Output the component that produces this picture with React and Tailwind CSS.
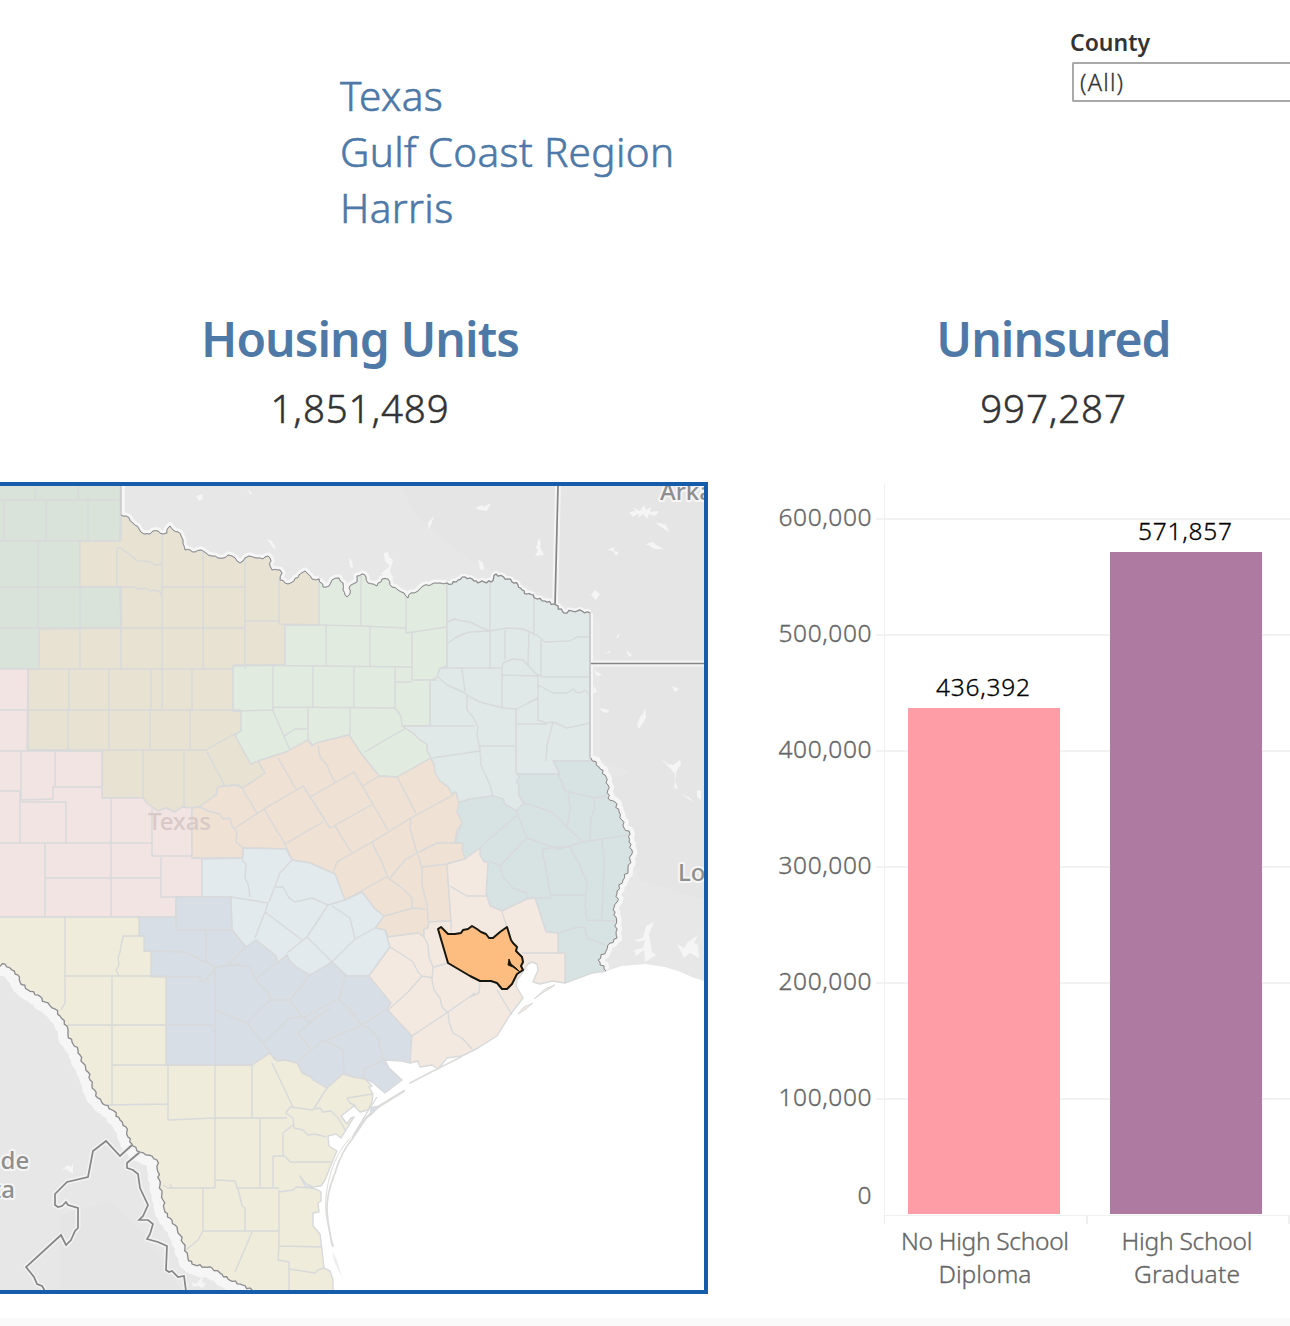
import React from "react";

const FONT = '"Noto Sans", "Open Sans", sans-serif';

/* ---------- geometry helpers ---------- */

const parse = (s) => s.trim().split(/\s+/).map((p) => p.split(",").map(Number));
const join = (pts) => pts.map((p) => p.map((n) => Math.round(n * 10) / 10).join(",")).join(" ");

// Adds small meanders between the points of a river course.
function meander(s, amp, step) {
  const pts = parse(s);
  const out = [pts[0]];
  let k = 0;
  for (let i = 1; i < pts.length; i++) {
    const [x0, y0] = pts[i - 1];
    const [x1, y1] = pts[i];
    const d = Math.hypot(x1 - x0, y1 - y0) || 1;
    const n = Math.max(1, Math.round(d / step));
    for (let j = 1; j < n; j++) {
      k++;
      const off = Math.sin(k * 2.3) * amp;
      out.push([x0 + ((x1 - x0) * j) / n - ((y1 - y0) / d) * off, y0 + ((y1 - y0) * j) / n + ((x1 - x0) / d) * off]);
    }
    out.push([x1, y1]);
  }
  return join(out);
}

/* ---------- map data ---------- */

const RED_WEST = meander(
  "121,515 126,516 133,523 139,529 144,534 150,534 153,531 158,531 163,534 167,533 168,528 170,526 173,530 178,532 181,536 183,540 185,550 190,550 195,552 201,550 206,553 212,556 218,558 224,558 228,555 232,556 237,561 240,563 245,558 249,556 256,558 263,559 265,557 268,556 270,558 271,561 270,566 272,570 280,570 282,573 280,580 288,584 294,581 299,575 305,571 308,574 312,579 319,579", 0.9, 3);
const RED_MID = meander(
  "319,579 323,587 329,586 332,580 339,578 343,583 343,590 345,595 347,597 350,594 349,588 353,584 357,582 357,576 362,574 366,577 368,583 373,584 377,586 382,579 388,579 392,587 398,590 404,593 408,598 411,593 418,591 423,586 432,584 440,583 447,583", 1, 3);
const RED_EAST = meander(
  "447,583 452,584 458,580 465,577 470,578 474,581 480,582 491,582 496,574 508,579 518,585 522,590 527,594 533,595 537,599 545,601 556,605 564,613 572,611 582,611 590,613", 1.3, 2.4);
const SABINE = meander(
  "591,758 599,767 605,775 608,785 608,798 615,802 619,812 622,820 624,828 630,834 629,842 632,850 630,860 628,870 623,880 617,891 617,902 613,910 616,917 616,932 617,938 610,943 606,951 598,960 606,971", 1.4, 2.8);
const RIO = meander(
  "252,1290 240,1284 228,1279 220,1273 212,1268 205,1267 192,1264 188,1258 185,1248 180,1235 175,1225 165,1212 163,1200 160,1185 158,1172 157,1160 152,1156 146,1155 140,1152 133,1146 128,1137 126,1127 120,1120 114,1111 105,1105 98,1098 92,1085 88,1072 83,1063 78,1050 72,1042 68,1035 67,1026 60,1016 55,1009 45,1002 38,995 28,990 20,982 18,975 12,970 5,964 -2,966", 1.2, 2.8);

const SE_WEST = "565,983 565,953 558,953 558,933 546,932 535,898 527,899 502,911 490,906 486,893 488,862 484,862 480,855 480,848 465,859";
const NE_SE = "458,803 470,799 493,796 503,799 505,804 516,811 524,803 519,796 519,785 517,783 517,780 520,777 517,774 560,774 553,761 590,761";
const CENTRAL_EAST = "431,758 434,765 435,773 440,781 448,787 452,794 456,792 457,797 459,803 457,812 462,823 457,830 455,842 463,843 462,849 465,859";
const CENTRAL_NORTH = "258,761 286,752 308,740 312,746 316,743 320,742 349,735 360,752 379,776 397,777 431,758";
const CENTRAL_SOUTH = "451,921 429,922 428,928 424,929 424,937 418,933 388,937 385,930 375,928 384,916 375,909 362,892 345,900 335,874 310,863 292,860 286,849 243,848 243,858 202,858 192,858";
const CAPITAL_SOUTH = "390,947 369,976 347,976 332,962 310,975 296,967 289,960 287,955 278,963 276,956 256,940 246,947 232,930 231,897";
const ALAMO_WEST = "252,1065 166,1065 166,977 151,977 151,951 144,951 144,936 139,936 139,917";

const REGIONS = [
  ["#d9e3d9", "-2,484 120,484 120,541 80,541 80,587 120,587 121,628 39,629 39,669 -2,669"],
  ["#e8e2d3", RED_WEST + " 319,625 285,625 285,665 233,666 233,711 241,711 241,731 235,735 243,750 251,764 258,761 265,773 243,788 235,785 218,787 216,795 199,807 192,808 182,807 175,812 166,808 158,811 152,807 147,803 143,798 102,798 102,751 28,750 28,669 39,669 39,629 121,628 120,587 80,587 80,541 120,541"],
  ["#f1e4e3", "-2,669 28,669 27,750 102,751 102,798 143,798 147,803 152,807 158,811 166,808 175,812 182,807 192,808 192,858 202,858 202,897 176,897 176,917 -2,917"],
  ["#e1ebe0", RED_MID + " 447,667 440,668 437,677 430,681 430,726 402,726 413,733 420,740 427,744 427,750 431,758 397,777 379,776 360,752 349,735 320,742 314,746 308,740 286,752 258,761 251,764 243,750 235,735 241,731 241,711 233,711 233,666 285,665 285,625 319,625"],
  ["#e0e8e8", RED_EAST + " 590,761 553,761 560,774 517,774 520,777 517,783 519,785 519,796 524,803 516,811 505,804 503,799 493,796 470,799 458,803 457,797 456,792 452,794 448,787 440,781 435,773 434,765 431,758 427,750 427,744 420,740 413,733 402,726 430,726 430,681 437,677 440,668 447,667"],
  ["#d7e3e2", NE_SE + " " + SABINE + " 592,973 " + SE_WEST + " 455,842 462,823 457,812"],
  ["#efe1d3", "192,808 199,807 216,795 218,787 235,785 243,788 265,773 " + CENTRAL_NORTH + " " + CENTRAL_EAST + " 447,864 " + CENTRAL_SOUTH],
  ["#e2eaee", "202,859 243,858 243,848 286,849 292,860 310,863 335,874 345,900 362,892 375,909 384,916 375,928 385,930 " + CAPITAL_SOUTH + " 202,897"],
  ["#d8dee5", "176,897 231,897 232,930 246,947 256,940 276,956 278,963 287,955 289,960 296,967 310,975 332,962 347,976 369,976 391,1003 387,1009 412,1036 410,1063 402,1061 385,1060 389,1068 402,1080 385,1093 372,1082 365,1079 353,1077 343,1074 327,1088 313,1080 311,1077 302,1073 297,1063 285,1060 277,1061 270,1053 " + ALAMO_WEST + " 176,917"],
  ["#efecdb", "-2,917 139,917 139,936 144,936 144,951 151,951 151,977 166,977 166,1065 252,1065 270,1053 277,1061 285,1060 297,1063 302,1073 311,1077 313,1080 327,1088 343,1074 353,1077 365,1079 372,1086 369,1087 373,1094 372,1102 368,1110 360,1112 354,1106 341,1116 347,1124 351,1118 354,1117 341,1138 336,1134 328,1136 329,1146 337,1151 331,1165 325,1180 321,1186 313,1187 306,1184 300,1176 305,1186 318,1190 321,1192 321,1201 318,1203 319,1212 313,1213 313,1226 320,1234 322,1250 324,1268 330,1271 333,1280 333,1292 252,1292 " + RIO],
  ["#f3e9e0", "465,859 480,848 480,855 484,862 488,862 486,893 490,906 502,911 527,899 535,898 546,932 558,933 558,953 565,953 565,983 552,981 540,984 533,982 538,970 537,964 532,962 528,964 523,972 517,980 516,986 523,998 510,1015 497,1036 478,1048 462,1056 447,1058 438,1069 432,1065 420,1067 418,1061 410,1063 412,1036 387,1009 391,1003 369,976 390,947 385,930 388,937 418,933 424,937 424,929 428,928 429,922 451,921 447,864"],
];

const COUNTY_LINES = `
M0 500H120M35 486V500M78 486V500M4 500V541M46 500V541M88 500V541M0 541H80M38 541V628M80 587V628M0 587H120M0 628H39
M121 515V541M117 548L121 548L138 561L143 561L150 562L155 565L162 564M117 548V587M120 587H134L138 589L145 588L150 591L155 590L160 592L162 596
M162 534V710M162 587H245M203 551V669M245 557V669M245 621H280M279 580V624L319 625M245 665H285M39 628H245M28 669H233
M121 587V669M80 628V669M69 669V710M109 669V710M151 669V710M192 669V710M0 710H241M68 710V750M109 710V750M150 710V750M190 710V750
M28 750H206L236 733M143 750V798M184 751V808M207 752L225 786L240 785
M0 751H102M21 751V800M55 751V787M102 787H53V799L21 800M0 791H20M21 802H66V843M20 791V843M0 843H152M111 798V916M152 809V856H192M161 857V897H202M45 843V916M45 878H161
M65 917V1003L61 1010M65 976H166M123 936H144M123 936L121 946L120 952L118 958L119 965L116 970L119 976M112 977V1105M68 1025H215M112 1065H252M105 1105L168 1104
M168 1065V1120L215 1118H287M215 1065V1188M163 1185L168 1188H215M170 1184L172 1188M215 1180L235 1181L237 1188H279M203 1188V1231L198 1240L186 1250M203 1231H279
M260 1118V1188M252 1065V1118M238 1188L242 1206L245 1208V1231M279 1190V1246L322 1247M273 1156V1188M273 1156L285 1156L290 1162H331M283 1133V1156M283 1133L294 1124
M293 1118L286 1113L290 1107L313 1110M272 1063L293 1107M313 1110L327 1088M315 1109L320 1108L323 1112L331 1111L338 1118L346 1131M293 1118L294 1128L303 1130L308 1135L315 1134L326 1137
M347 1098L373 1094M347 1098L350 1103L356 1106M279 1192L293 1190L296 1187L313 1188M252 1232L235 1272M279 1246L278 1260L289 1262V1290M289 1269L315 1273L318 1270L324 1268
M361 576V626M285 625L319 625L361 626L405 628M406 596V633L447 627M326 625V665M370 627V667M233 665L412 667M412 632V680H437M273 665V708M313 666V708M354 667V708M395 667V708M395 682H412
M233 711L273 710V707L395 708M273 711L290 750M308 708V740M283 737L295 729H308M350 708V735M368 750L406 728M365 752L377 745M395 708L401 716L402 726
M447 622L455 619L462 621L470 622L480 627L490 631L507 628L523 629L537 635L545 642L570 641L577 637L590 637M447 644L455 638L463 634L470 632L490 631M490 582V668M505 630V660M529 632L528 665M534 593V636M541 640V676
M440 668L502 668L503 663L513 659L523 660L536 674L543 677L590 677M502 668V707M502 675L538 676M538 676V720L547 723L553 722L567 728L590 723M538 685L553 693L567 693L573 689L576 692L580 693L585 690L589 694
M438 677L447 685L463 692L470 697L480 702L503 708L517 709L528 703L538 698M462 668L465 692M467 695V710L473 717L478 727L477 735L479 745L480 750L481 765L490 785L493 796M402 726H475M516 708V774M516 724L547 724M553 722L547 745L546 761M479 746H516M432 758L480 751
M558 773L565 791L595 798L607 795M568 793L570 808L567 828M594 798L595 808L591 817L590 839M524 803L540 808L552 812L567 827L583 842L628 835M583 842L558 849L527 838L516 811M527 838L500 866L490 861M480 847L516 816M500 866L503 877L513 888L527 893L527 899
M542 849L551 897M527 898H551M551 895H586M542 849L556 847L570 847L578 862L587 882L585 905L587 920L615 921M602 838L604 862L602 920M558 933L578 927L585 928L587 938L605 945
M278 758L296 789M318 745L320 757L327 765L330 773L335 782M242 788L257 813M235 828L264 809L303 786L330 828L373 804M310 797L354 772M354 772L388 830M363 786L379 776M264 809L285 844L323 822M285 844L292 860M335 826L351 852
M333 873L337 862L372 842L411 818L453 795M397 777L416 813M411 818L410 828L417 853M417 853L437 843L463 843M372 842L377 853L382 862L388 878L402 888L412 898V908M390 878L405 860L417 853M422 867L447 864M418 855L422 868L422 885L427 905L428 922M345 900L388 876M385 916L413 908L425 909
M200 807L208 811L220 814L223 819L230 818L232 826L237 832L236 842L243 848L242 860L246 864L245 878L248 884L250 897M231 897L268 903L265 912L255 938M269 902L280 873L292 860M275 887L283 887L289 898L295 902L312 898L328 905L345 900M328 905L307 937L287 953M265 912L302 940M307 937L332 962L355 939L375 928M332 906L350 918L355 939
M176 897V930H232M144 951L185 952L216 967L240 964M206 930V963M216 967L205 981L200 981V977H166M215 970V1065M228 965L246 947M235 965L250 967L257 982L268 992L270 1000H290L310 975M257 978L287 955M345 976L339 1000L357 1015M338 999L303 1018L290 1000M270 1000L247 1023L263 1043L275 1060M215 1010L247 1023
M263 1043L290 1018L303 1017L309 1023L330 1008M310 1048L298 1033L322 1013M297 1062L323 1040L343 1050L344 1073M327 1040L362 1025L385 1010M348 1010L362 1025L370 1029L378 1038L383 1060L363 1070L365 1079
M390 947L403 955L413 962L418 972L422 976L433 978M424 937L428 945L429 957L433 967L432 980L434 990L440 998L442 1007L447 1012M422 976L408 992L388 1010M434 967L448 963M450 886L467 896H487M451 920V932M502 912L507 927M522 953H558M497 990L512 1015M470 997L479 993L480 981M448 1012L475 993M412 1036L448 1012L449 1022L453 1033L462 1038L472 1049
`;

const MEXICO_LINES = [
  "132,1145 120,1156 106,1141 93,1151 88,1177 67,1182 55,1194 55,1205 58,1207 62,1206 66,1202 68,1205 78,1208 78,1228 75,1231 71,1240 66,1245 61,1235 26,1267 34,1277 37,1284 42,1286 45,1291",
  "140,1152 127,1163 127,1168 133,1170 138,1174 140,1188 148,1205 143,1216 139,1220 148,1220 153,1224 150,1234 147,1239 158,1242 167,1246 166,1270 169,1272 172,1271 178,1277 184,1276 186,1291",
];

const LAKES = [
  "196,496 202,494 203,499 199,501", "247,489 252,493 248,496 250,494", "267,539 272,541 276,548 274,549",
  "349,558 352,561 353,568 350,567",
  "384,553 388,552 389,557 393,560 391,567 390,572 394,579 390,577 387,575 381,574 385,570 390,566 385,561",
  "434,516 429,530 428,523",
  "475,508 482,505 483,507 491,503 487,511 480,510", "478,559 483,563 484,570 480,569", "539,538 541,543 540,547 544,555 535,556 538,550 536,548",
  "629,512 636,511 632,507 640,511 644,505 646,510 651,507 650,512 659,511 655,516 649,514 647,519 643,514 638,518 639,513 633,517", "656,522 666,525 669,532 661,527 658,525", "646,544 653,542 656,545 664,549 655,549",
  "607,550 614,547 614,551 619,552 616,556 613,551", "591,595 595,590 600,594 596,600", "616,638 619,633 619,637", "604,654 610,651 611,652", "626,650 632,655 629,657",
  "672,686 679,689 675,692", "594,670 602,675 597,676", "594,686 597,692 593,693",
  "599,708 609,710 608,713 603,712", "643,714 645,708 646,718 639,729 637,725 640,717",
  "661,759 668,764 673,765 680,760 681,764 676,772 676,778 674,779 678,789 674,788 675,778 675,774 670,768",
  "680,793 690,798 693,802 687,798", "697,790 701,791 701,800 697,797",
  "646,926 654,922 649,934 652,952 656,955 645,962 644,950 636,956 634,950 643,948 645,940 639,942 634,940 643,938",
  "677,944 684,948 688,942 698,935 694,943 698,945 699,958 690,953 684,958 680,950", "68,1165 71,1167 73,1163 73,1174 66,1169 62,1170",
  "192,1282 196,1284 203,1276 202,1282 206,1284 202,1288 198,1286 193,1287",
];

function TexasMap() {
  return (
    <svg className="block h-[804px] w-[704px]" viewBox="0 486 704 804" fontFamily={FONT}>
      <rect x="0" y="486" width="704" height="804" fill="#e7e7e7" />
      <path d="M400 486H704V760L680 790L600 760V620L470 560L420 520Z" fill="#e5e5e5" />
      <path d="M610 780L704 740V900L640 880Z" fill="#e5e5e5" />
      <path d="M60 1215L110 1200L150 1240L180 1290H60Z" fill="#e5e5e5" />
      {LAKES.map((p) => (
        <polygon key={p} points={p} fill="#f5f5f5" />
      ))}
      <path d="M704 981L692 977L678 971L665 967L645 964L622 966L606 971L500 930L400 1030L300 1090V1290H704Z" fill="#fff" />
      <g fill="none" stroke="#f6f6f6" strokeLinejoin="round">
        <polyline points={RIO} strokeWidth="20" />
        <polyline points={RED_WEST} strokeWidth="7" />
        <polyline points={RED_MID} strokeWidth="7" />
        <polyline points={RED_EAST} strokeWidth="6" />
        <polyline points={SABINE} strokeWidth="10" />
        <path d="M122 486V515M590 613V758" strokeWidth="6" />
        <path d="M558 486L555 606M590 663.5H704" strokeWidth="6" stroke="#f4f4f4" />
        {MEXICO_LINES.map((p) => (
          <polyline key={p} points={p} strokeWidth="5" stroke="#f2f2f2" />
        ))}
      </g>
      <g fill="none" stroke="#858585" strokeWidth="1.7">
        <path d="M558 486L555 606M590 663.5H704" />
        {MEXICO_LINES.map((p) => (
          <polyline key={p} points={p} />
        ))}
      </g>
      {REGIONS.map(([fill, points]) => (
        <polygon key={fill} points={points} fill={fill} stroke="#d8d9da" strokeWidth="1.4" strokeLinejoin="round" />
      ))}
      <path d={COUNTY_LINES} fill="none" stroke="#d8d9da" strokeWidth="1.4" strokeLinejoin="round" />
      <path d="M121 486V515M590 613V758" stroke="#c6c6c6" strokeWidth="1.5" />
      <g fill="none" stroke="#8a8a8a" strokeWidth="1" strokeLinejoin="round">
        <polyline points={RED_WEST} />
        <polyline points={RED_MID} />
        <polyline points={RED_EAST} strokeWidth="1.2" />
        <polyline points={SABINE} />
        <polyline points={RIO} strokeWidth="1.2" />
      </g>
      <g fill="none" stroke="#dcdcda" strokeLinecap="round">
        <path d="M404 1091L378 1107L366 1118L353 1137" strokeWidth="2.4" />
        <path d="M353 1138Q341 1152 335 1173Q326 1195 327 1212Q329 1232 333 1246" strokeWidth="1.8" />
        <path d="M350 1138Q337 1152 331 1172Q324 1195 326 1214L332 1246" strokeWidth="1" />
        <path d="M410 1083L437 1069L461 1057" strokeWidth="1.8" />
      </g>
      <polygon points="332,1251 337,1260 342,1277 335,1264" fill="#eeeeee" />
      <g stroke="#d8d9da" strokeWidth="1">
        <polygon points="370,1108 377,1097 366,1114 354,1134" fill="#efecdb" />
        <polygon points="371,1107 373,1107 380,1106 370,1116" fill="#d8dee5" />
        <polygon points="534,999 545,989 555,985 541,994" fill="#f3e9e0" />
        <polygon points="518,1014 524,1007 533,1003 526,1009" fill="#f3e9e0" />
      </g>
      <path
        d="M438 929L441 927L448 934H455L461 933L463 930L468 929L472 926L477 929L481 932L486 934L489 938H493L500 932L507 927L511 940L513 943L517 947L516 951L522 957L523 962L521 966L523 970L517 974L512 984L507 989H502L497 983L491 981L480 981L470 976L448 963Z"
        fill="#fdbd80" stroke="#16160f" strokeWidth="2" strokeLinejoin="round"
      />
      <path d="M509 959L511 964L516 968L520 972L513 967L508 965Z" fill="#16160f" stroke="#16160f" strokeWidth="1" />
      <g fontSize="24" fontWeight="500" fill="#8f8f8f" stroke="#f5f5f5" strokeWidth="4" paintOrder="stroke" strokeLinejoin="round">
        <text x="660" y="500">Arka</text>
        <text x="678" y="881">Lo</text>
        <text x="0.5" y="1169">de</text>
        <text x="-8" y="1198">ta</text>
      </g>
      <text x="148" y="830" fontSize="24" fontWeight="500" fill="#d8c9c7" textLength="63">Texas</text>
    </svg>
  );
}

/* ---------- bar chart ---------- */

const TICKS = [
  ["600,000", 519], ["500,000", 635], ["400,000", 751], ["300,000", 867], ["200,000", 983], ["100,000", 1099],
];
const BARS = [
  { x: 908, top: 708, fill: "#ff9da7", value: "436,392", valueY: 696, name: [["No High School", 168], ["Diploma", 93]] },
  { x: 1110, top: 552, fill: "#af7aa1", value: "571,857", valueY: 540, name: [["High School", 131], ["Graduate", 106]] },
];

function EducationChart() {
  return (
    <svg className="block h-[812px] w-[582px]" viewBox="708 482 582 812" fontFamily={FONT} fontWeight="300" fontSize="24.5">
      {TICKS.map(([label, y]) => (
        <g key={label}>
          <rect x="876" y={y - 1} width="414" height="2" fill="#f2f2f2" />
          <text x="778.5" y={y + 7} textLength="93" fill="#666" stroke="#666" strokeWidth="0.35">{label}</text>
        </g>
      ))}
      <text x="871.5" y="1204" textAnchor="end" fill="#666" stroke="#666" strokeWidth="0.35">0</text>
      <rect x="884" y="484" width="1" height="732" fill="#f0f0f0" />
      <rect x="884" y="1215" width="406" height="1" fill="#f0f0f0" />
      <rect x="884" y="1215" width="1" height="9" fill="#ececec" />
      <rect x="1086" y="1215" width="2" height="9" fill="#f0f0f0" />
      <rect x="1288" y="1215" width="2" height="9" fill="#f0f0f0" />
      {BARS.map((b) => (
        <g key={b.value} textAnchor="middle">
          <rect x={b.x} y={b.top} width="152" height={1214 - b.top} fill={b.fill} />
          <text x={b.x + 75} y={b.valueY} textLength="94" fill="#000" stroke="#000" strokeWidth="0.3">{b.value}</text>
          {b.name.map(([line, w], i) => (
            <text key={line} x={b.x + 77} y={1250 + i * 33} textLength={w} fill="#666" stroke="#666" strokeWidth="0.35">{line}</text>
          ))}
        </g>
      ))}
    </svg>
  );
}

function Stat({ title, value, className }) {
  return (
    <div className={className}>
      <h2 className="text-[48px] leading-[64px] font-semibold tracking-[-0.95px] text-[#4e79a7]">{title}</h2>
      <p className="mt-[5px] text-[38.5px] leading-[64px] font-light tracking-[0.85px] text-[#333] [-webkit-text-stroke:0.5px_#333]">{value}</p>
    </div>
  );
}

export default function App() {
  return (
    <div className="flex h-[1326px] w-[1290px] flex-col overflow-hidden bg-white font-['Noto_Sans','Open_Sans',sans-serif]">
      <header className="flex h-[307px] justify-between pl-[340px]">
        <div className="pt-[68px] text-[40.5px] leading-[56px] font-light tracking-[0.35px] whitespace-nowrap text-[#4e79a7] [-webkit-text-stroke:0.6px_#4e79a7]">
          <p>Texas</p>
          <p>Gulf Coast Region</p>
          <p>Harris</p>
        </div>
        <div className="w-[220px] pt-[25px]">
          <p className="text-[23px] leading-[34px] font-semibold text-[#333]">County</p>
          <div className="mt-[3px] ml-[2px] flex h-[40px] items-center rounded-l-[2px] border-2 border-r-0 border-[#a9a9a9] pt-px pl-[6px] text-[23.5px] font-light tracking-[1.2px] text-[#333] [-webkit-text-stroke:0.3px_#333]">
            (All)
          </div>
        </div>
      </header>
      <section className="flex h-[175px] text-center whitespace-nowrap">
        <Stat title="Housing Units" value="1,851,489" className="w-[720px] shrink-0" />
        <Stat title="Uninsured" value="997,287" className="w-[667px] shrink-0" />
      </section>
      <main className="flex h-[836px]">
        <div className="h-[812px] w-[708px] border-4 border-l-0 border-[#155cab]">
          <TexasMap />
        </div>
        <EducationChart />
      </main>
      <footer className="h-2 bg-[#fafafa]" />
    </div>
  );
}
